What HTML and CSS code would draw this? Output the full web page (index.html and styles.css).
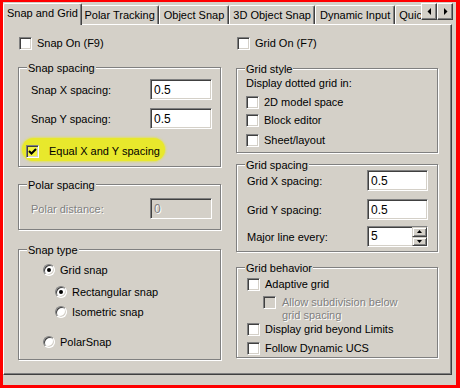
FILE: index.html
```html
<!DOCTYPE html>
<html lang="en">
<head>
    <meta charset="UTF-8">
    <title>Drafting Settings</title>
    <link rel="stylesheet" href="styles.css">
</head>
<body>
    <div class="frame">
        <div class="tabbar">
            <div class="tabs">
                <div class="tab active">Snap and Grid</div>
                <div class="tab">Polar Tracking</div>
                <div class="tab">Object Snap</div>
                <div class="tab">3D Object Snap</div>
                <div class="tab">Dynamic Input</div>
                <div class="tab last">Quic</div>
            </div>
            <div class="tab-scroll">
                <span class="scroll-btn"><svg width="5" height="7" viewBox="0 0 5 7"><polygon points="4,0 4,7 0.5,3.5"/></svg></span>
                <span class="scroll-btn"><svg width="5" height="7" viewBox="0 0 5 7"><polygon points="1,0 1,7 4.5,3.5"/></svg></span>
            </div>
        </div>

        <div class="panel">
            <!-- left column -->
            <div class="column">
                <div class="option top-option"><span class="check"></span>Snap On (F9)</div>

                <div class="group snap-spacing">
                    <div class="group-title">Snap spacing</div>
                    <div class="field first"><span>Snap X spacing:</span><span class="input">0.5</span></div>
                    <div class="field second"><span>Snap Y spacing:</span><span class="input">0.5</span></div>
                    <div class="option marked">
                        <span class="check checked"><svg width="11" height="11" viewBox="0 0 11 11"><polyline points="2,5 4.5,7.5 9,3" fill="none" stroke="#000" stroke-width="2"/></svg></span>
                        Equal X and Y spacing
                    </div>
                </div>

                <div class="group polar-spacing">
                    <div class="group-title">Polar spacing</div>
                    <div class="field"><span class="disabled">Polar distance:</span><span class="input off">0</span></div>
                </div>

                <div class="group snap-type">
                    <div class="group-title">Snap type</div>
                    <div class="option radio-row grid-snap"><span class="radio on"></span>Grid snap</div>
                    <div class="option radio-row sub rect-snap"><span class="radio on"></span>Rectangular snap</div>
                    <div class="option radio-row sub iso-snap"><span class="radio"></span>Isometric snap</div>
                    <div class="option radio-row polar-snap"><span class="radio"></span>PolarSnap</div>
                </div>
            </div>

            <!-- right column -->
            <div class="column">
                <div class="option top-option"><span class="check"></span>Grid On (F7)</div>

                <div class="group grid-style">
                    <div class="group-title">Grid style</div>
                    <div class="group-note">Display dotted grid in:</div>
                    <div class="option model"><span class="check"></span>2D model space</div>
                    <div class="option block"><span class="check"></span>Block editor</div>
                    <div class="option sheet"><span class="check"></span>Sheet/layout</div>
                </div>

                <div class="group grid-spacing">
                    <div class="group-title">Grid spacing</div>
                    <div class="field first"><span>Grid X spacing:</span><span class="input">0.5</span></div>
                    <div class="field second"><span>Grid Y spacing:</span><span class="input">0.5</span></div>
                    <div class="field third">
                        <span>Major line every:</span>
                        <span class="input spin">
                            <span>5</span>
                            <span class="spin-btns">
                                <span class="spin-btn"><svg width="5" height="3" viewBox="0 0 5 3"><polygon points="2.5,0 5,3 0,3"/></svg></span>
                                <span class="spin-btn"><svg width="5" height="3" viewBox="0 0 5 3"><polygon points="0,0 5,0 2.5,3"/></svg></span>
                            </span>
                        </span>
                    </div>
                </div>

                <div class="group grid-behavior">
                    <div class="group-title">Grid behavior</div>
                    <div class="option adaptive"><span class="check"></span>Adaptive grid</div>
                    <div class="option subdivide"><span class="check off"></span><span class="disabled">Allow subdivision below<br>grid spacing</span></div>
                    <div class="option beyond"><span class="check"></span>Display grid beyond Limits</div>
                    <div class="option follow"><span class="check"></span>Follow Dynamic UCS</div>
                </div>
            </div>
        </div>
    </div>
</body>
</html>
```

FILE: styles.css
```css
body {
    margin: 0;
    font-family: "Liberation Sans", Arial, sans-serif;
    font-size: 11px;
    color: #000;
}

.frame {
    width: 460px;
    height: 388px;
    box-sizing: border-box;
    border: solid #ff0000;
    border-width: 2px 4px 3px 3px;
    padding-bottom: 10px;
    background: #d4d0c8;
    display: flex;
    flex-direction: column;
}

/* tab strip */
.tabbar {
    display: flex;
    flex-shrink: 0;
    height: 23px;
    margin-bottom: -1px;
    position: relative;
    z-index: 1;
}

.tabs {
    flex: 1;
    min-width: 0;
    display: flex;
    align-items: flex-start;
    overflow: hidden;
    padding-left: 2px;
}

.tab {
    flex-shrink: 0;
    height: 19px;
    margin-top: 3px;
    box-sizing: border-box;
    padding: 3px 3.5px 0;
    line-height: 13px;
    white-space: nowrap;
    border-top: 1px solid #fff;
    border-left: 1px solid #fff;
    border-right: 1px solid #404040;
    border-radius: 2px 2px 0 0;
    box-shadow: inset -1px 0 #808080;
}

/* only the start of this tab shows before the scroll buttons */
.tab.last {
    padding-right: 40px;
}

.tab.active {
    height: 22px;
    margin: 1px -2px 0;
    padding: 3px 3px 0;
    background: #d4d0c8;
    position: relative;
    z-index: 1;
}

.tab-scroll {
    display: flex;
    margin: 1px 3px 0 0;
}

.scroll-btn {
    width: 16px;
    height: 17px;
    box-sizing: border-box;
    display: flex;
    align-items: center;
    justify-content: center;
    border: 1px solid;
    border-color: #fff #404040 #404040 #fff;
    box-shadow: inset -1px -1px #808080;
    background: #d4d0c8;
}

/* page body */
.panel {
    flex: 1;
    margin-right: 4px;
    border: 1px solid;
    border-color: #fff #404040 #404040 #fff;
    box-shadow: inset -1px -1px #808080;
    display: grid;
    grid-template-columns: 203px 202px;
    column-gap: 15px;
    align-content: start;
    padding: 12px 0 0 14px;
}

.group {
    border: 1px solid #808080;
    box-shadow: inset 1px 1px #fff, 1px 1px #fff;
}

.group-title {
    width: fit-content;
    margin: -6px 0 0 8px;
    padding: 0 1px;
    line-height: 12px;
    background: #d4d0c8;
}

.group-note {
    margin: 2px 0 0 9px;
    line-height: 13px;
}

.option {
    display: flex;
    align-items: center;
    gap: 5px;
    line-height: 13px;
    white-space: nowrap;
}

.top-option {
    padding-left: 1px;
}

.field {
    display: flex;
    align-items: center;
    justify-content: space-between;
    padding: 0 8px 0 12px;
}

.disabled {
    color: #808080;
    text-shadow: 1px 1px 0 #fff;
}

/* controls */
.check {
    width: 13px;
    height: 13px;
    flex-shrink: 0;
    box-sizing: border-box;
    display: flex;
    background: #fff;
    border: 1px solid;
    border-color: #808080 #fff #fff #808080;
    box-shadow: inset 1px 1px #404040, inset -1px -1px #d4d0c8;
}

.check.off {
    background: #d4d0c8;
}

.radio {
    width: 12px;
    height: 12px;
    flex-shrink: 0;
    box-sizing: border-box;
    display: flex;
    align-items: center;
    justify-content: center;
    border-radius: 50%;
    background: #fff;
    border: 1px solid;
    border-color: #808080 #fff #fff #808080;
    box-shadow: inset 1px 1px #404040, inset -1px -1px #d4d0c8;
}

.radio.on::after {
    content: "";
    width: 4px;
    height: 4px;
    border-radius: 50%;
    background: #000;
}

.input {
    width: 62px;
    height: 21px;
    box-sizing: border-box;
    display: flex;
    align-items: center;
    padding-left: 3px;
    font-size: 12px;
    background: #fff;
    border: 1px solid;
    border-color: #808080 #fff #fff #808080;
    box-shadow: inset 1px 1px #404040, inset -1px -1px #d4d0c8;
}

.input.off {
    background: #d4d0c8;
    color: #808080;
    text-shadow: 1px 1px 0 #fff;
}

.input.spin {
    justify-content: space-between;
    align-items: stretch;
    line-height: 19px;
}

.spin-btns {
    width: 15px;
    display: flex;
    flex-direction: column;
}

.spin-btn {
    flex: 1;
    box-sizing: border-box;
    display: flex;
    align-items: center;
    justify-content: center;
    background: #d4d0c8;
    border: 1px solid;
    border-color: #d4d0c8 #404040 #404040 #d4d0c8;
    box-shadow: inset 1px 1px #fff, inset -1px -1px #808080;
}

/* left column groups */
.snap-spacing {
    margin-top: 17px;
    padding-bottom: 5px;
}

.snap-spacing .first {
    margin-top: 5px;
}

.snap-spacing .second {
    margin-top: 8px;
}

.marked {
    width: 143px;
    height: 23px;
    box-sizing: border-box;
    margin: 9px 0 0 3px;
    padding: 3px 0 0 4px;
    gap: 10px;
    border-radius: 12px;
    background: #e8e82c;
    box-shadow: 0 0 2px 1px rgba(232, 232, 44, 0.6);
}

.marked .check {
    background: #f4f43c;
}

.polar-spacing {
    margin-top: 17px;
    padding-bottom: 10px;
}

.polar-spacing .field {
    margin-top: 7px;
}

.snap-type {
    margin-top: 19px;
    padding-bottom: 10px;
}

.radio-row {
    line-height: 14px;
    padding-left: 24px;
}

.radio-row.sub {
    padding-left: 36px;
}

.grid-snap { margin-top: 7px; }
.rect-snap { margin-top: 8px; }
.iso-snap { margin-top: 6px; }
.polar-snap { margin-top: 16px; }

/* right column groups */
.grid-style {
    margin-top: 18px;
    padding-bottom: 5px;
}

.grid-style .option {
    padding-left: 9px;
}

.model { margin-top: 6px; }
.block { margin-top: 5px; }
.sheet { margin-top: 7px; }

.grid-spacing {
    margin-top: 11px;
    padding-bottom: 4px;
}

.grid-spacing .field {
    padding: 0 9px 0 10px;
}

.grid-spacing .input {
    width: 61px;
}

.grid-spacing .first { margin-top: -1px; }
.grid-spacing .second { margin-top: 8px; }
.grid-spacing .third { margin-top: 6px; }

.grid-behavior {
    margin-top: 15px;
    padding-bottom: 2px;
}

.grid-behavior .option {
    padding-left: 10px;
}

.adaptive { margin-top: 4px; }

.grid-behavior .subdivide {
    margin-top: 5px;
    padding-left: 26px;
    align-items: flex-start;
    gap: 6px;
}

.beyond { margin-top: 1px; }
.follow { margin-top: 6px; }
```
